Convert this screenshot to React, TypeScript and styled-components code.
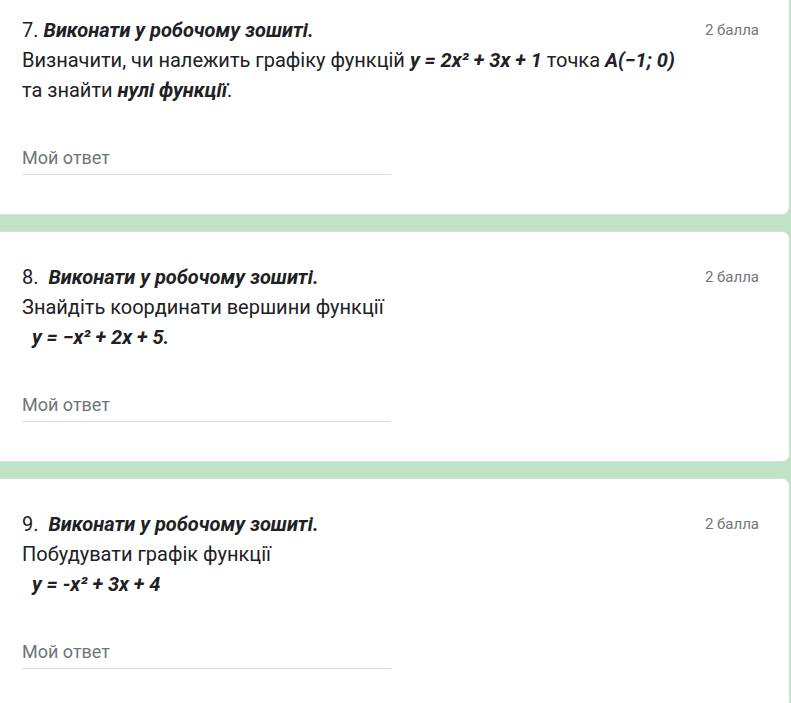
import React from 'react';
import styled, { createGlobalStyle } from 'styled-components';

const GlobalStyle = createGlobalStyle`
  body {
    margin: 0;
    background: #c1e3c5;
    font-family: Roboto, "Noto Sans", Arial, sans-serif;
    overflow: hidden;
  }
`;

const Page = styled.div`
  display: flex;
  flex-direction: column;
  gap: 16px;
  margin: -16px 0 0 -10px;
  width: 800px;
`;

const Card = styled.div`
  background: #fff;
  border: 1px solid #dadce0;
  border-radius: 8px;
  padding: 30px 30px 39px 31px;
  color: #202124;
`;

const Header = styled.div`
  display: flex;
  justify-content: space-between;
  align-items: center;
`;

const Title = styled.div`
  font-size: 20px;
  line-height: 30px;
  white-space: pre;
`;

const Points = styled.div`
  font-size: 15px;
  line-height: 30px;
  color: #70757a;
`;

const Line = styled.div`
  font-size: 20px;
  line-height: 30px;
  white-space: pre;
`;

const B = styled.b`
  font-weight: 700;
  font-style: italic;
`;

const Answer = styled.input`
  display: block;
  box-sizing: border-box;
  margin-top: 37px;
  width: 369px;
  height: 33px;
  padding: 0 0 2px;
  border: none;
  border-bottom: 1px solid #dadce0;
  outline: none;
  background: transparent;
  font-family: Roboto, "Noto Sans", Arial, sans-serif;
  font-size: 18px;
  color: #202124;

  &::placeholder {
    color: #70757a;
  }
`;

// question text, one entry per line
const questions = [
  {
    id: 7,
    gap: ' ',
    lines: [
      <>
        Визначити, чи належить графіку функцій <B>y = 2x² + 3x + 1</B> точка <B>A(−1; 0)</B>
      </>,
      <>
        та знайти <B>нулі функції</B>.
      </>,
    ],
  },
  {
    id: 8,
    gap: '\u00a0 ',
    lines: [
      <>Знайдіть координати вершини функції</>,
      <>
        {'\u00a0\u00a0'}
        <B>y = −x² + 2x + 5.</B>
      </>,
    ],
  },
  {
    id: 9,
    gap: '\u00a0 ',
    lines: [
      <>Побудувати графік функції</>,
      <>
        {'\u00a0\u00a0'}
        <B>y = -x² + 3x + 4</B>
      </>,
    ],
  },
];

const App: React.FC = () => {
  return (
    <>
      <GlobalStyle />
      <Page>
        {questions.map(q => (
          <Card key={q.id}>
            <Header>
              <Title>
                {q.id}.{q.gap}
                <B>Виконати у робочому зошиті.</B>
              </Title>
              <Points>2 балла</Points>
            </Header>
            {q.lines.map((line, i) => (
              <Line key={i}>{line}</Line>
            ))}
            <Answer placeholder="Мой ответ" />
          </Card>
        ))}
      </Page>
    </>
  );
};

export default App;
